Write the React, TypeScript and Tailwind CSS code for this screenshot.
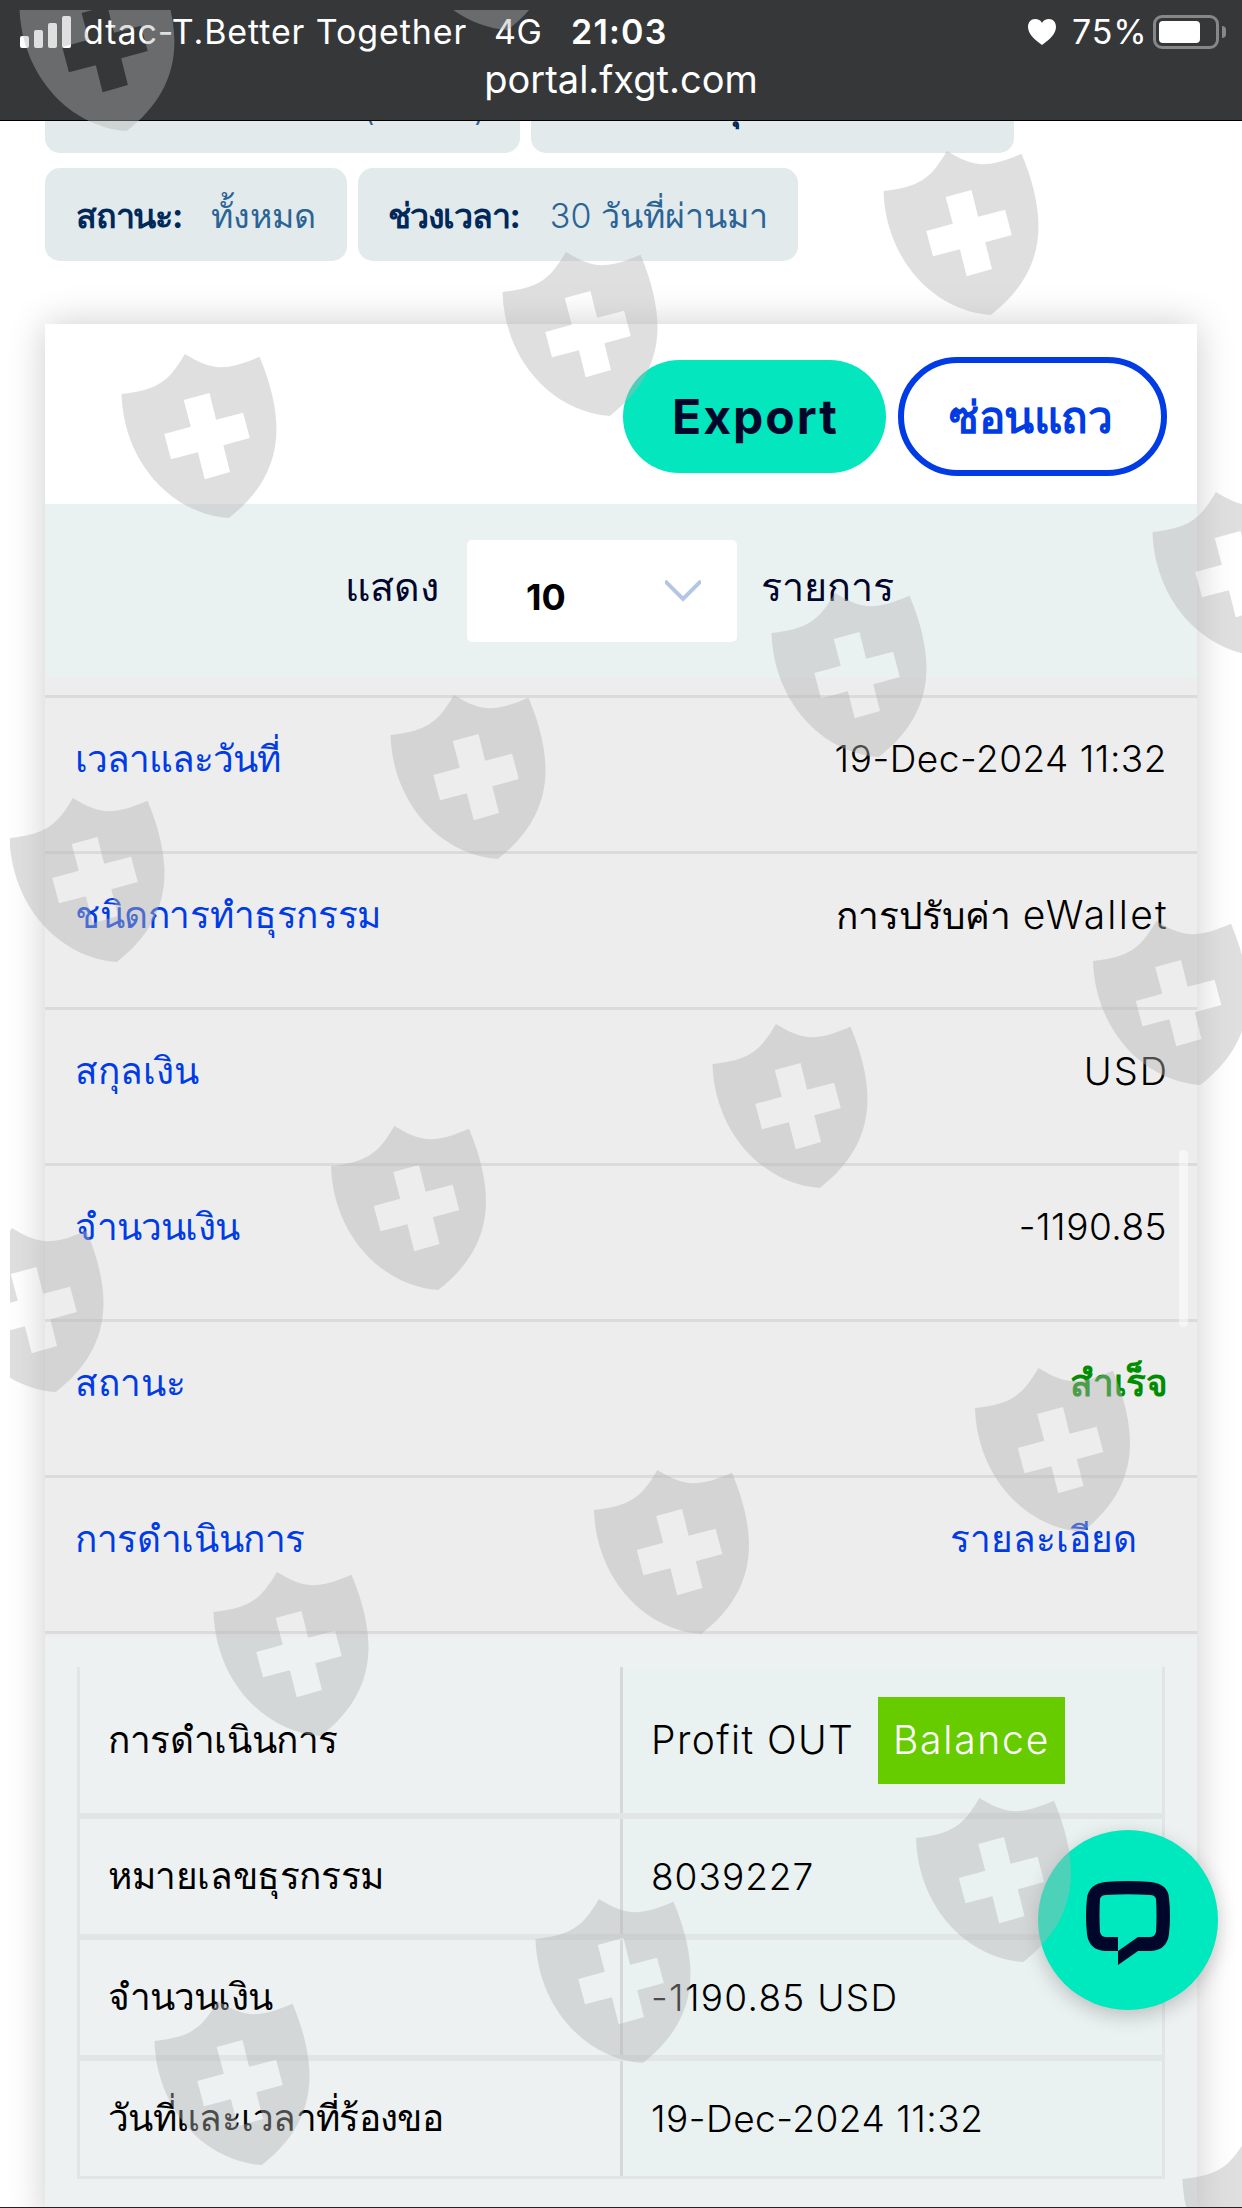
import React from 'react';

interface DetailRow {
  label: string;
  labelClass?: string;
  value: React.ReactNode;
  valueClass?: string;
}

const SHIELDS: [number, number][] = [
  [19.4, -33],
  [400.4, -134],
  [883.5, 151],
  [502.5, 252],
  [121.5, 354],
  [1152.5, 492],
  [771.5, 593],
  [390.5, 695],
  [9.5, 798],
  [1093, 921],
  [712.5, 1024],
  [331, 1126],
  [-51.5, 1228],
  [975, 1368],
  [594, 1470],
  [213.5, 1572],
  [916, 1798],
  [535.5, 1899],
  [154.5, 2001],
  [1182.5, 2139],
];

const transaction: DetailRow[] = [
  {
    label: 'เวลาและวันที่',
    labelClass: 'tracking-[-1px]',
    value: '19-Dec-2024 11:32',
    valueClass: 'tracking-[0.5px]',
  },
  {
    label: 'ชนิดการทำธุรกรรม',
    labelClass: 'tracking-[-0.4px]',
    value: (
      <>
        <span className="font-medium">การปรับค่า</span>
        <span className="ml-3 text-[39px] tracking-[2.3px]">eWallet</span>
      </>
    ),
    valueClass: '-mr-[2px]',
  },
  { label: 'สกุลเงิน', value: 'USD', valueClass: 'text-[38px] tracking-[2px] -mr-[2px]' },
  { label: 'จำนวนเงิน', labelClass: 'tracking-[-0.9px]', value: '-1190.85', valueClass: 'tracking-[0.5px]' },
  {
    label: 'สถานะ',
    value: <span className="font-semibold tracking-[-0.5px] text-[#008d00]">สำเร็จ</span>,
  },
  {
    label: 'การดำเนินการ',
    labelClass: 'tracking-[-0.4px]',
    value: <a className="pr-[30px] font-normal text-[#003be6]">รายละเอียด</a>,
  },
];

const details: DetailRow[] = [
  {
    label: 'การดำเนินการ',
    labelClass: 'tracking-[-0.4px]',
    value: (
      <>
        <span className="w-[227px] text-[39px] tracking-[1.4px]">Profit OUT</span>
        <span className="flex h-[87px] w-[187px] items-center justify-center bg-[#66cc00] text-[39px] tracking-[1.8px] text-white">
          Balance
        </span>
      </>
    ),
  },
  { label: 'หมายเลขธุรกรรม', labelClass: 'tracking-[-0.4px]', value: '8039227', valueClass: 'tracking-[1px]' },
  { label: 'จำนวนเงิน', labelClass: 'tracking-[-0.9px]', value: '-1190.85 USD', valueClass: 'tracking-[1.3px]' },
  {
    label: 'วันที่และเวลาที่ร้องขอ',
    labelClass: 'tracking-[-0.7px]',
    value: '19-Dec-2024 11:32',
    valueClass: 'tracking-[0.5px]',
  },
];

const StatusBar = () => (
  <header className="relative z-10 h-[121px] border-b border-black bg-[#363739] text-white">
    <div className="flex h-[63px] items-center pl-5 pr-4 text-[34px] leading-none">
      <div className="flex h-8 items-end gap-[5px]">
        <i className="h-3 w-[9px] rounded-xs bg-white" />
        <i className="h-[18px] w-[9px] rounded-xs bg-white" />
        <i className="h-[25px] w-[9px] rounded-xs bg-white" />
        <i className="h-8 w-[9px] rounded-xs bg-white" />
      </div>
      <span className="ml-3 w-[411px] tracking-[0.9px]">dtac-T.Better Together</span>
      <span className="w-[77px] tracking-[0.5px]">4G</span>
      <span className="font-semibold tracking-[1.2px]">21:03</span>
      <div className="ml-auto flex items-center">
        <svg className="mr-[16px] h-[26px] w-7" viewBox="0 0 28 26" fill="currentColor">
          <path d="M14 26C7 21 0 15 0 8C0 3 3 0 7 0C10 0 13 1.500 14 4C15 1.500 18 0 21 0C25 0 28 3 28 8C28 15 21 21 14 26Z" />
        </svg>
        <span className="w-[81px] tracking-[0.8px]">75%</span>
        <div className="flex h-[34px] w-[66px] items-center rounded-[9px] border-3 border-[#868789] pl-[3px]">
          <div className="h-[22px] w-[41px] rounded-[4px] bg-white" />
        </div>
        <div className="ml-[3px] h-3 w-1 rounded-r-full bg-[#868789]" />
      </div>
    </div>
    <p className="text-center text-[38px] leading-[32px]">portal.fxgt.com</p>
  </header>
);

const Filters = () => (
  <section className="-mt-[61px] ml-[45px] whitespace-nowrap text-[34px] font-light leading-none text-[#2a6496]">
    <div className="flex gap-[11px]">
      <div className="flex h-[93px] w-[475px] items-center rounded-[15px] bg-[#e2eaeb] pl-[318px] pt-[2px]">
        <span className="w-[111px]">(</span>
        <span>)</span>
      </div>
      <div className="flex h-[93px] w-[483px] items-center rounded-[15px] bg-[#e2eaeb] pl-[30px] pt-[2px]">
        <b className="font-bold tracking-[-1.2px] text-[#00285a]">ชนิดการทำธุรกรรม:</b>
      </div>
    </div>
    <div className="mt-[15px] flex gap-[11px]">
      <div className="flex h-[93px] w-[302px] items-center justify-between rounded-[15px] bg-[#e2eaeb] px-[31px] pt-[2px]">
        <b className="font-bold tracking-[-1.2px] text-[#00285a]">สถานะ:</b>
        <span className="font-normal">ทั้งหมด</span>
      </div>
      <div className="flex h-[93px] w-[440px] items-center justify-between rounded-[15px] bg-[#e2eaeb] px-[30px] pt-[2px]">
        <b className="font-bold tracking-[-1.2px] text-[#00285a]">ช่วงเวลา:</b>
        <span>
          30 <span className="font-normal">วันที่ผ่านมา</span>
        </span>
      </div>
    </div>
  </section>
);

const Toolbar = () => (
  <>
    <div className="flex h-[180px] items-center justify-end gap-3 bg-white pr-[30px] pt-[5px]">
      <button className="h-[113px] w-[263px] rounded-full bg-[#03e6be] pl-[2px] text-[48px] font-bold tracking-[2px] text-[#00072b]">
        Export
      </button>
      <button className="h-[119px] w-[269px] rounded-full border-6 border-[#003be6] pr-1 text-[44px] font-semibold tracking-[-0.5px] text-[#003be6]">
        ซ่อนแถว
      </button>
    </div>
    <div className="flex h-[174px] items-center bg-[#eaf1f1] text-[39.500px] text-[#00072b]">
      <span className="-mt-[6px] ml-[300px] w-[122px]">แสดง</span>
      <div className="flex h-[102px] w-[270px] items-center justify-between rounded-[5px] bg-white pl-[59px] pr-9">
        <span className="pt-[11px] text-[36px] font-bold text-black">10</span>
        <svg className="h-[22px] w-9" viewBox="0 0 36 22" fill="none" stroke="#b4c7e2" strokeWidth="4">
          <path d="M0 1L18 19L36 1" />
        </svg>
      </div>
      <span className="-mt-[6px] ml-6">รายการ</span>
    </div>
  </>
);

const Shields = () => (
  <svg className="pointer-events-none absolute inset-0 z-20" width="1242" height="2208" viewBox="0 0 1242 2208">
    <clipPath id="area">
      <rect x="10" y="10" width="1232" height="2198" />
    </clipPath>
    <g clipPath="url(#area)" fill="#b3b3b3" fillOpacity=".42" fillRule="evenodd">
      {SHIELDS.map(([x, y]) => (
        <path
          key={`${x}-${y}`}
          transform={`translate(${x} ${y})`}
          d="M63.400 0C90 16 102 18 138 2.700C150 31 155 56 155 75C155 112 137 141 107.300 164C50 160 2 108 0 40C36 36 47 28 63.400 0ZM62.200 46L69.300 72.700L42.800 80L49.500 105.300L76.400 98.300L83.200 125.300L108.500 118L101.800 91.300L128.300 84L121.600 58.700L94.600 65.700L88 39Z"
        />
      ))}
    </g>
  </svg>
);

const ChatButton = () => (
  <button className="absolute left-[1038px] top-[1830px] z-10 flex size-[180px] items-center justify-center rounded-full bg-[#00e8bd] shadow-[0_6px_20px_rgba(0,0,0,0.2)]">
    <svg className="mt-[5px] h-[84px] w-[84px]" viewBox="0 0 84 84" fill="#00072b" fillRule="evenodd">
      <path d="M19 1Q42 -1 65 1Q82 3 83 17Q85 35 83 53Q81 69 65 70H52L32 84V56H20Q15 56 14 51Q13 34 14 18Q15 14 20 14Q42 12.500 64 14Q69 14 70 18Q71 34 70 51Q69 56 64 56H52L32 70H19Q3 69 1 53Q-1 35 1 17Q3 3 19 1Z" />
    </svg>
  </button>
);

export default function App() {
  return (
    <div className="relative h-[2208px] w-[1242px] overflow-hidden border-b border-[#222] bg-white font-[Inter,'Noto_Sans',sans-serif]">
      <StatusBar />
      <Filters />

      <main className="ml-[45px] mt-[63px] h-[1900px] w-[1152px] bg-[#edf1f2] shadow-[0_0_36px_rgba(0,0,0,0.2)]">
        <Toolbar />
        <div className="border-b-3 border-[#ededed] bg-[#ededed] pt-[17px]">
          {transaction.map((row) => (
            <div
              key={row.label}
              className="flex h-[156px] justify-between border-t-3 border-[#dbdbdb] px-[30px] pt-[33px] text-[37px] leading-[56px]"
            >
              <span className={`text-[#003be6] ${row.labelClass ?? ''}`}>{row.label}</span>
              <span className={`font-light text-black ${row.valueClass ?? ''}`}>{row.value}</span>
            </div>
          ))}
          <div className="h-[3px] bg-[#dbdbdb]" />
        </div>

        <div className="mx-8 mt-[30px] border-x-3 border-b-3 border-[#e1e5e5] text-[37px] text-black">
          {details.map((row, i) => (
            <div key={row.label} className={`flex border-[#e1e5e5] ${i === 0 ? 'h-[146px]' : 'h-[121px] border-t-6'}`}>
              <div
                className={`w-[543px] border-r-3 border-[#d6d9d9] pl-7 leading-[56px] ${
                  i === 0 ? 'pt-[45px]' : 'pt-[29px]'
                } ${row.labelClass ?? ''}`}
              >
                {row.label}
              </div>
              <div className={`flex flex-1 items-center bg-[#eaf1f1] pl-7 font-light ${row.valueClass ?? ''}`}>
                {row.value}
              </div>
            </div>
          ))}
        </div>
      </main>

      {/* native scroll thumb */}
      <div className="absolute left-[1179px] top-[1150px] h-[177px] w-[9px] rounded-full bg-white/50" />
      <ChatButton />
      <Shields />
    </div>
  );
}
